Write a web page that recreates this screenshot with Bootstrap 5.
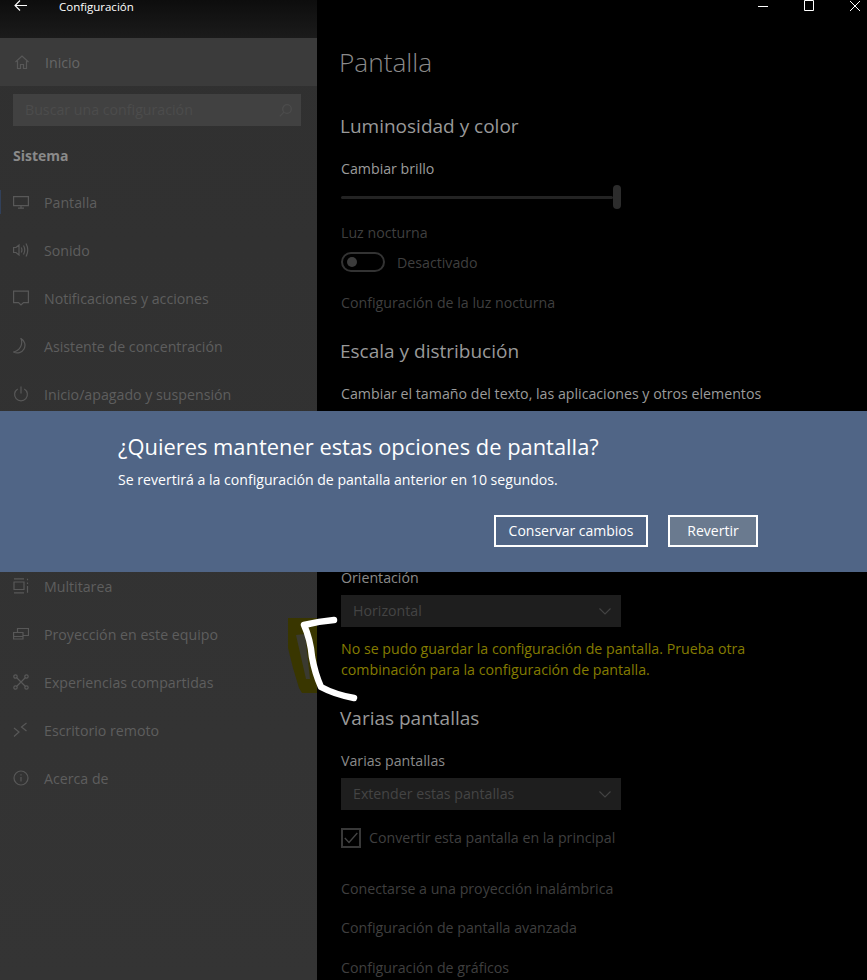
<!DOCTYPE html>
<html lang="es">
<head>
<meta charset="utf-8">
<title>Configuración</title>
<link href="https://cdn.jsdelivr.net/npm/bootstrap@5.3.0/dist/css/bootstrap.min.css" rel="stylesheet">
<style>
html,body{margin:0;height:100%;background:#000;overflow:hidden}
body{font-family:"Open Sans","Noto Sans","Liberation Sans",sans-serif;font-size:14.2px}
.app-shell{position:relative;width:867px;height:980px;overflow:hidden;background:#000}
.side-pane{width:317px;flex:none;background:linear-gradient(#303030,#343434);color:#5e5e5e}
.title-row{height:38px;background:linear-gradient(#0d0d0d,#1b1b1b);color:#fff;padding-left:14px;font-size:11.5px}
.title-row span{margin-left:32px;line-height:14px}
.home-row{height:48px;background:#3b3b3b;padding-left:15px;gap:16px;color:#666}
.home-row span,.nav-entry span{padding-top:2px}
.search-box{height:32px;margin:8px 16px 0 13px;background:#414141;color:#4c4c4c;padding:0 9px 0 12px}
.section-name{margin:20px 0 12px 13px;line-height:20px;font-weight:700;color:#8a8a8a;font-size:14px}
.nav-entry{height:48px;padding-left:13px;gap:15px;color:#5e5e5e;white-space:nowrap;position:relative}
.nav-entry.is-current::before{content:"";position:absolute;left:0;top:12px;width:1px;height:24px;background:#31405a}
.nav-gap{height:144px}
.icon-line{fill:none;stroke:#585858;stroke-width:1.2}
.main-pane{flex:1;padding-left:24px;min-width:0}
.page-head{height:48px;margin:38px 0 0 -2px;line-height:48px;font-size:26.2px;font-weight:300;color:#8b8b8b}
.sub-head{height:32px;line-height:32px;font-size:19px;margin-left:-1px;color:#999;font-weight:400}
.t1{margin-top:24px}.t2{margin-top:22px}.t3{margin-top:22px}
.txt{height:20px;line-height:20px;white-space:nowrap}
.strong-txt{color:#9b9b9b}
.mid-txt{color:#8a8a8a}
.dim-txt{color:#3f3f3f}
.brightness-label{margin-top:17px}
.scale-label{margin-top:17px}
.multi-label{margin-top:17px}
.slider-box{width:280px;height:24px;margin-top:6px}
.slider-track{width:272px;height:3px;background:#232323;border-radius:2px}
.slider-thumb{width:8px;height:24px;background:#2c2c2c;border-radius:4px}
.pill{width:44px;height:20px;border:2px solid #333;border-radius:10px;padding-left:4px}
.pill i{display:block;width:10px;height:10px;border-radius:50%;background:#3c3c3c}
.pill-label{margin-left:12px;padding-top:2px}
.select-box{width:280px;height:32px;margin-top:7px;background:#1e1e1e;color:#444;padding:0 10px 0 12px}
.warn-txt{margin-top:11px;line-height:21px;color:#857c00;width:430px}
.tick-box{width:20px;height:20px;border:2px solid #383838}
.dialog-band{position:absolute;left:0;right:0;top:411px;height:161px;background:#506586;color:#fff;padding:21px 109px 0 118px}
.dialog-title{font-size:21.9px;line-height:30px;margin:0;font-weight:400}
.dialog-text{font-size:14.1px;line-height:20px;margin-top:8px}
.dialog-actions{margin-top:25px;gap:20px}
.dlg-btn{height:32px;padding:0;border:2px solid #fff;border-radius:0;color:#fff;font-size:14px;line-height:28px;background:transparent}
.dlg-save{width:154px}
.dlg-revert{width:90px;background:#6a7a8f}
.window-btns{position:absolute;top:0;right:0;width:109px;height:12px}
.scribble{position:absolute;left:280px;top:610px;width:90px;height:95px}
.luz-label{margin-top:14px}
.toggle-row{margin-top:9px;height:20px}
.night-link{margin-top:21px}
.orient-label{margin-top:164px}
.check-row{margin-top:18px;height:20px}
.check-label{margin-left:8px}
.link-a{margin-top:31px}
.link-b{margin-top:19px}
.link-c{margin-top:20px}
</style>
</head>
<body>
<div class="app-shell d-flex">
  <aside class="side-pane d-flex flex-column">
    <div class="title-row d-flex align-items-start">
      <svg width="13" height="12" viewBox="0 0 13 12"><path d="M6 0.5 1 5.500l5 5M1 5.500h12" fill="none" stroke="#fff" stroke-width="1.1"/></svg>
      <span>Configuración</span>
    </div>
    <div class="home-row d-flex align-items-center">
      <svg width="14" height="14" viewBox="0 0 14 14"><path class="icon-line" d="M0.5 7 7 1l6.500 6M2.500 6v7.500h3v-4h3v4h3V6"/></svg>
      <span>Inicio</span>
    </div>
    <div class="search-box d-flex align-items-center justify-content-between">
      <span>Buscar una configuración</span>
      <svg width="13" height="13" viewBox="0 0 13 13"><circle cx="8" cy="5" r="4.300" fill="none" stroke="#4c4c4c" stroke-width="1.200"/><path d="M5 8 .8 12.300" stroke="#4c4c4c" stroke-width="1.200"/></svg>
    </div>
    <div class="section-name">Sistema</div>
    <div class="nav-entry is-current d-flex align-items-center">
      <svg width="16" height="16" viewBox="0 0 16 16"><path class="icon-line" d="M.6 2.600h14.800v9H.6zM8 11.600v2.400M5 14.200h6"/></svg><span>Pantalla</span>
    </div>
    <div class="nav-entry d-flex align-items-center">
      <svg width="16" height="16" viewBox="0 0 16 16"><path class="icon-line" d="M.6 5.500h2.400L6 3v10L3 10.500H.6zM8.200 5.500q1.500 2.500 0 5M10.500 3.500q2.500 4.500 0 9M13 1.500q3.500 6.500 0 13"/></svg><span>Sonido</span>
    </div>
    <div class="nav-entry d-flex align-items-center">
      <svg width="16" height="16" viewBox="0 0 16 16"><path class="icon-line" d="M.6 1.100h14.800v11.500h-4.900L8 15l-2.500-2.400H.6z"/></svg><span>Notificaciones y acciones</span>
    </div>
    <div class="nav-entry d-flex align-items-center">
      <svg width="16" height="16" viewBox="0 0 16 16"><path class="icon-line" d="M8 .6A7.600 7.600 0 0 1 .6 14 10 10 0 0 0 8 .6z"/></svg><span>Asistente de concentración</span>
    </div>
    <div class="nav-entry d-flex align-items-center">
      <svg width="16" height="16" viewBox="0 0 16 16"><path class="icon-line" d="M8 .5v7M4.700 3a6.400 6.400 0 1 0 6.600 0"/></svg><span>Inicio/apagado y suspensión</span>
    </div>
    <div class="nav-gap"></div>
    <div class="nav-entry d-flex align-items-center">
      <svg width="16" height="16" viewBox="0 0 16 16"><path class="icon-line" d="M1 .8h10M1 14.800h10M1 4h10v7.500H1zM14.500 .8v1.500M14.500 4.500v1.500M14.500 8v6.800"/></svg><span>Multitarea</span>
    </div>
    <div class="nav-entry d-flex align-items-center">
      <svg width="16" height="16" viewBox="0 0 16 16"><path class="icon-line" d="M4.500 6.500V2.500h11v7H10M.6 6.500h9.400v6.500H.6zM.6 10.500h9.400"/></svg><span>Proyección en este equipo</span>
    </div>
    <div class="nav-entry d-flex align-items-center">
      <svg width="16" height="16" viewBox="0 0 16 16"><path class="icon-line" d="M3.500 3.500l9 9M12.500 3.500l-9 9"/><circle class="icon-line" cx="2.500" cy="2.500" r="1.700"/><circle class="icon-line" cx="13.500" cy="2.500" r="1.700"/><circle class="icon-line" cx="2.500" cy="13.500" r="1.700"/><circle class="icon-line" cx="13.500" cy="13.500" r="1.700"/></svg><span>Experiencias compartidas</span>
    </div>
    <div class="nav-entry d-flex align-items-center">
      <svg width="16" height="16" viewBox="0 0 16 16"><path class="icon-line" d="M1 6l5 4-5 4.500M13.500 1 8.500 5l5 4"/></svg><span>Escritorio remoto</span>
    </div>
    <div class="nav-entry d-flex align-items-center">
      <svg width="16" height="16" viewBox="0 0 16 16"><circle class="icon-line" cx="8" cy="8" r="7"/><path class="icon-line" d="M8 7v4.500M8 4.200v1.200"/></svg><span>Acerca de</span>
    </div>
  </aside>

  <main class="main-pane">
    <h1 class="page-head">Pantalla</h1>
    <h2 class="sub-head t1">Luminosidad y color</h2>
    <div class="txt strong-txt brightness-label">Cambiar brillo</div>
    <div class="slider-box d-flex align-items-center">
      <div class="slider-track"></div><div class="slider-thumb"></div>
    </div>
    <div class="txt dim-txt luz-label">Luz nocturna</div>
    <div class="d-flex align-items-center toggle-row">
      <div class="pill d-flex align-items-center"><i></i></div><span class="dim-txt pill-label">Desactivado</span>
    </div>
    <div class="txt dim-txt night-link">Configuración de la luz nocturna</div>
    <h2 class="sub-head t2">Escala y distribución</h2>
    <div class="txt strong-txt scale-label">Cambiar el tamaño del texto, las aplicaciones y otros elementos</div>
    <div class="txt mid-txt orient-label">Orientación</div>
    <div class="select-box d-flex align-items-center justify-content-between">
      <span>Horizontal</span>
      <svg width="12" height="7" viewBox="0 0 12 7"><path d="M.5.500 6 6l5.500-5.500" fill="none" stroke="#444" stroke-width="1.100"/></svg>
    </div>
    <div class="warn-txt">No se pudo guardar la configuración de pantalla. Prueba otra combinación para la configuración de pantalla.</div>
    <h2 class="sub-head t3">Varias pantallas</h2>
    <div class="txt mid-txt multi-label">Varias pantallas</div>
    <div class="select-box d-flex align-items-center justify-content-between">
      <span>Extender estas pantallas</span>
      <svg width="12" height="7" viewBox="0 0 12 7"><path d="M.5.500 6 6l5.500-5.500" fill="none" stroke="#444" stroke-width="1.100"/></svg>
    </div>
    <div class="d-flex align-items-center check-row">
      <div class="tick-box d-flex align-items-center justify-content-center">
        <svg width="14" height="12" viewBox="0 0 14 12"><path d="M.8 6 5 10.500 13.300 1" fill="none" stroke="#444" stroke-width="1.300"/></svg>
      </div>
      <span class="dim-txt check-label">Convertir esta pantalla en la principal</span>
    </div>
    <div class="txt dim-txt link-a">Conectarse a una proyección inalámbrica</div>
    <div class="txt dim-txt link-b">Configuración de pantalla avanzada</div>
    <div class="txt dim-txt link-c">Configuración de gráficos</div>
  </main>

  <svg class="window-btns" viewBox="0 0 109 12">
    <path d="M0 6.500h10M46.500.5h9v10h-9zM92 1l10 10M102 1 92 11" fill="none" stroke="#fff" stroke-width="1"/>
  </svg>

  <div class="dialog-band">
    <h3 class="dialog-title">¿Quieres mantener estas opciones de pantalla?</h3>
    <div class="dialog-text">Se revertirá a la configuración de pantalla anterior en 10 segundos.</div>
    <div class="dialog-actions d-flex justify-content-end">
      <button type="button" class="btn dlg-btn dlg-save">Conservar cambios</button>
      <button type="button" class="btn dlg-btn dlg-revert">Revertir</button>
    </div>
  </div>

  <svg class="scribble" viewBox="280 610 90 95">
    <path d="M288 618h29v75h-15l-3-5-6-20-5-20z" fill="#393600"/>
    <path d="M296 635l9-1 5 45-4 0z" fill="#3a3a30"/>
    <path d="M334 620C322 621 312 623 304 625 309 636 311 646 312 657 314 668 317 678 321 687 332 693 343 696 354 698" fill="none" stroke="#fff" stroke-width="6.500" stroke-linecap="round" stroke-linejoin="round"/>
  </svg>
</div>
<script src="https://cdn.jsdelivr.net/npm/bootstrap@5.3.0/dist/js/bootstrap.bundle.min.js"></script>
</body>
</html>
